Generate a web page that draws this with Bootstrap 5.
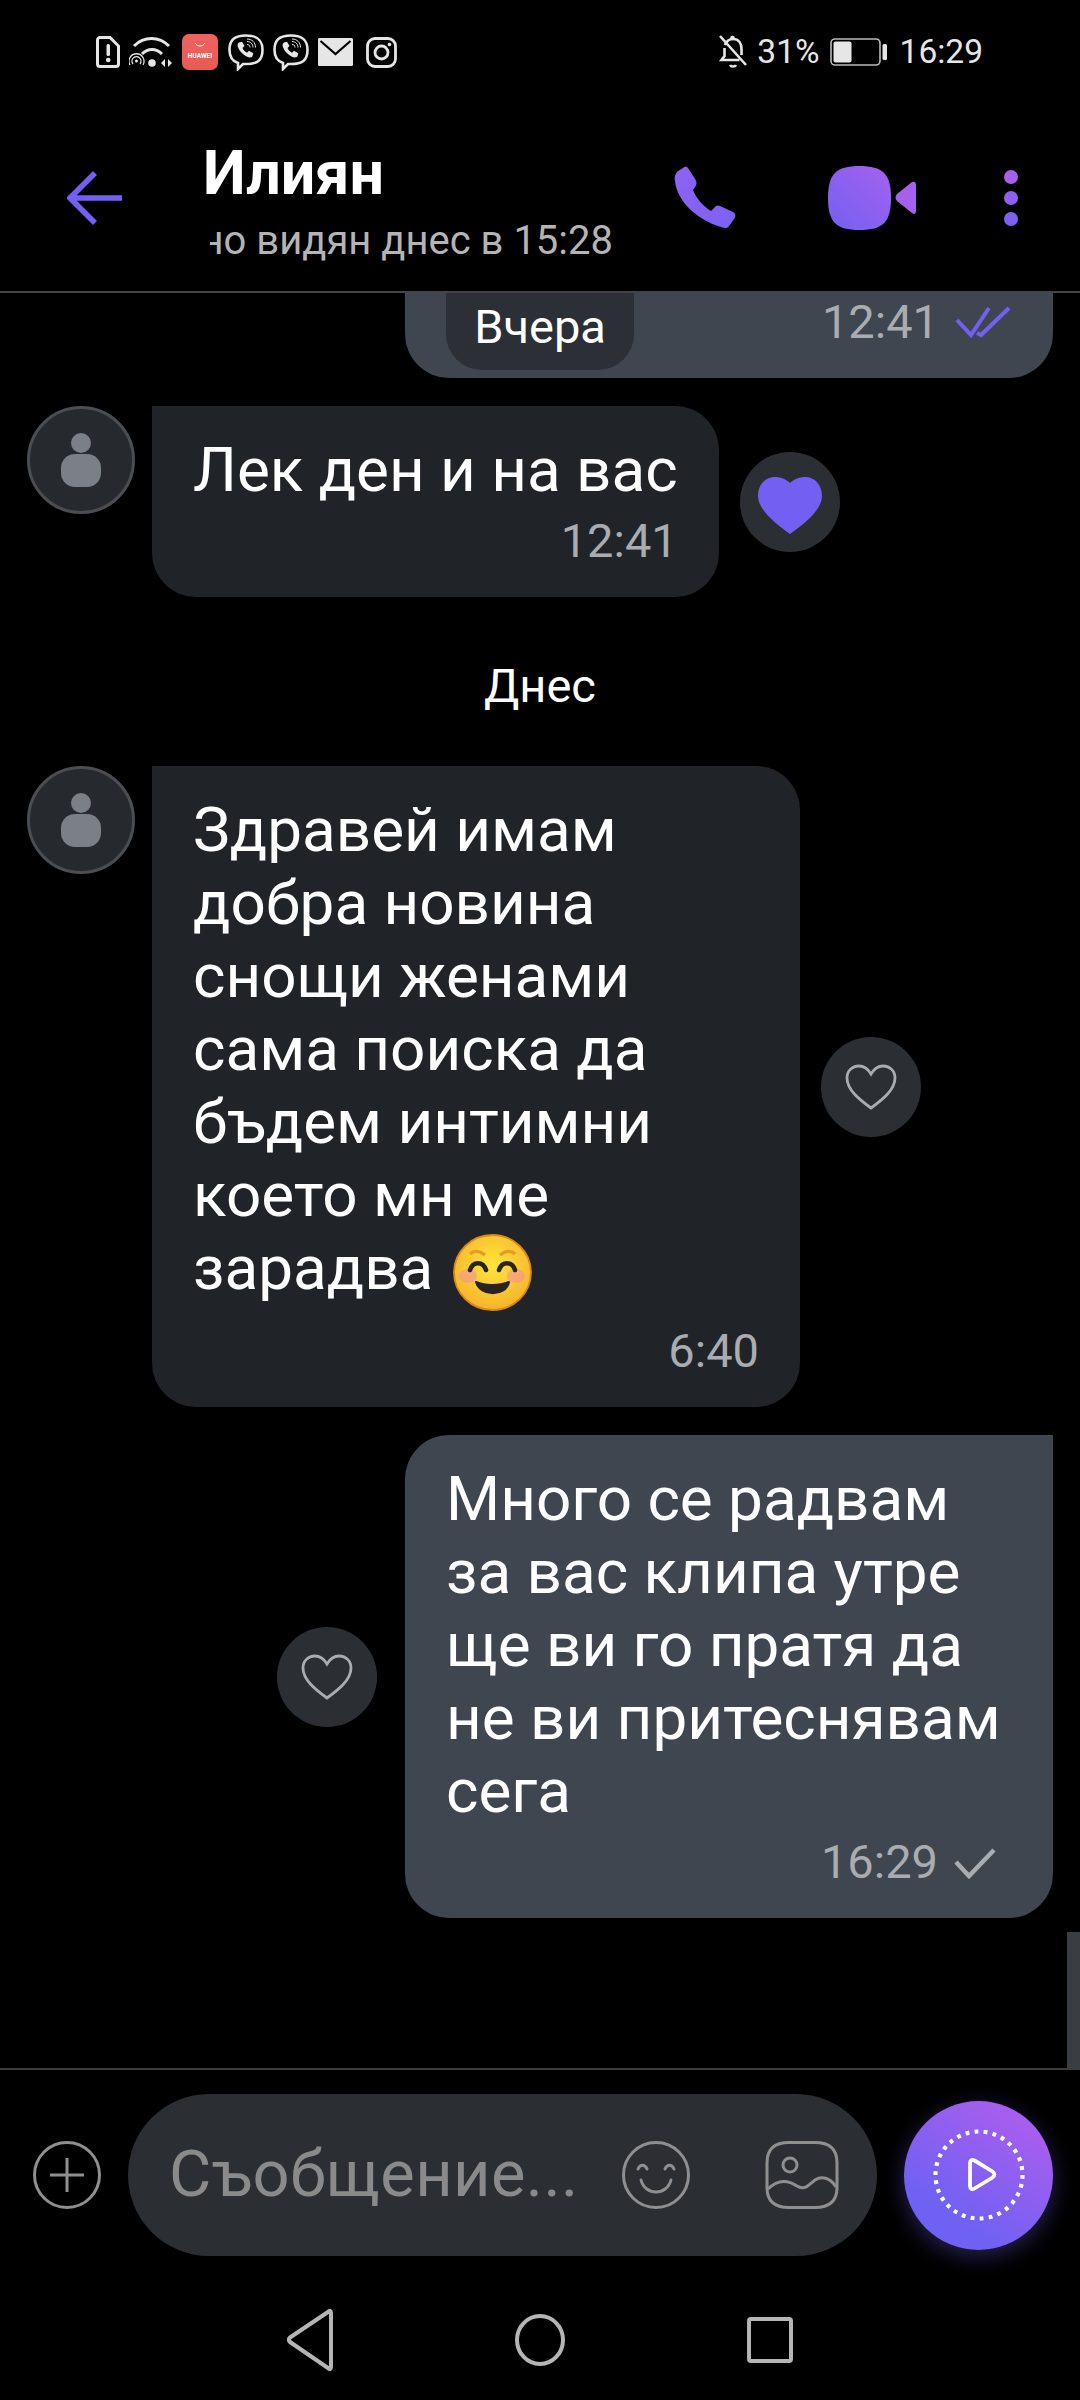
<!DOCTYPE html>
<html lang="bg">
<head>
<meta charset="utf-8">
<title>Илиян</title>
<link href="https://cdn.jsdelivr.net/npm/bootstrap@5.3.0/dist/css/bootstrap.min.css" rel="stylesheet">
<style>
html,body{background:#000;margin:0;}
.phone-screen{width:1080px;height:2400px;background:#000;overflow:hidden;font-family:Roboto,"Liberation Sans",sans-serif;color:#fff;position:relative;}
.status-strip{height:104px;padding:0 97px 0 96px;color:#e6e6e6;font-size:33.5px;line-height:40px;}
.status-left{gap:9px;}
.status-pct{margin-left:9px;}
.status-batt{margin-left:10px;}
.status-clock{margin-left:13px;}
.chat-head{height:189px;padding-left:67px;border-bottom:2px solid #444;}
.head-title{width:408px;margin-left:81px;align-self:flex-start;padding-top:36px;}
.head-name{font-size:61px;font-weight:700;line-height:66px;}
.head-seen{font-size:40px;line-height:50px;color:#b4b4b4;margin:10px -2px 0 7px;white-space:nowrap;overflow:hidden;justify-content:flex-end;}
.head-seen span{flex:none;}
.act-phone{margin-left:63px;}
.act-video{margin-left:92px;}
.act-more{margin-left:88px;}
.chat-scroll{height:1775px;overflow:hidden;padding-bottom:150px;position:relative;}
.msg-row{gap:17px;padding-left:27px;margin-top:28px;}
.msg-row-out{padding-right:27px;margin-top:28px;gap:28px;}
.avatar-disc{width:108px;height:108px;border-radius:50%;background:#26292e;border:3px solid #4a4d52;flex:none;}
.msg-bubble{padding:27px 41px 28px;font-size:62px;line-height:73px;border-radius:44px;}
.msg-in{background:#202429;border-top-left-radius:0;}
.msg-wide{width:648px;}
.msg-out{background:#3f464f;width:648px;border-top-right-radius:0;}
.msg-time{font-size:47px;line-height:56px;color:#a9acb0;margin-top:7px;}
.msg-time-gap{margin-top:18px;}
.check-gap{margin-right:16px;}
.like-disc{width:100px;height:100px;border-radius:50%;background:#2b2e33;flex:none;}
.like-gap{margin-left:4px;}
.day-mark{font-size:47px;line-height:56px;margin:61px 0 52px;}
.emoji-art{width:79px;height:77px;vertical-align:-16px;margin:-12px 0 -6px 4px;}
.quote-bubble{width:648px;height:130px;background:#3f464f;border-radius:0 0 44px 44px;padding-right:42px;}
.quote-inner{width:188px;margin-left:41px;margin-bottom:8px;background:#2c3036;border-radius:0 0 36px 36px;font-size:47px;line-height:56px;padding-bottom:15px;}
.quote-meta{padding-bottom:28px;gap:16px;margin-left:auto;}
.scroll-thumb{position:absolute;right:0;bottom:0;width:13px;height:136px;background:#3a3d42;}
.compose-bar{height:212px;padding:0 27px 0 33px;gap:27px;border-top:2px solid #3c3c3c;}
.compose-pill{width:749px;height:162px;background:#2b2e33;border-radius:81px;padding:0 38px 0 41px;}
.compose-hint{font-size:65px;color:#8a8a8a;letter-spacing:.4px;white-space:nowrap;flex:1;}
.compose-img{margin-left:75px;}
.send-orb{width:149px;height:149px;border-radius:50%;background:linear-gradient(35deg,#6f61f3 25%,#a85eee 85%);box-shadow:0 6px 22px rgba(115,96,242,.35);flex:none;}
.nav-strip{height:120px;}
.nav-cell{width:230px;}
</style>
</head>
<body>
<div class="phone-screen d-flex flex-column">

  <div class="status-strip d-flex align-items-center justify-content-between">
    <div class="status-left d-flex align-items-center">
      <svg width="24" height="32" viewBox="0 0 24 32"><path d="M4 1.500h10l8.500 8.500v18a2.500 2.500 0 0 1-2.500 2.500H4a2.500 2.500 0 0 1-2.500-2.500V4A2.500 2.500 0 0 1 4 1.500z" fill="none" stroke="#e6e6e6" stroke-width="3"/><rect x="10.500" y="8" width="3.500" height="12" rx="1.500" fill="#e6e6e6"/><circle cx="12.200" cy="24" r="2.300" fill="#e6e6e6"/></svg>
      <svg width="44" height="34" viewBox="0 0 44 34"><g fill="none" stroke="#e6e6e6" stroke-width="3"><path d="M5 11C15 1 30 1 40 11"/><path d="M13 19c6-6 14-6 20 0"/></g><g fill="none" stroke="#e6e6e6" stroke-width="1.300"><path d="M1 30a7.500 7.500 0 1 1 13 0"/><path d="M4 29a4.500 4.500 0 1 1 7 0"/></g><circle cx="7.500" cy="26" r="1.500" fill="#e6e6e6"/><circle cx="23" cy="28" r="3.800" fill="#e6e6e6"/><path d="M32 28l4-4v8zM39 24l4 4-4 4z" fill="#e6e6e6"/></svg>
      <svg width="37" height="37" viewBox="0 0 37 37"><defs><linearGradient id="hw" x1="0" y1="0" x2="0" y2="1"><stop offset="0" stop-color="#f0625f"/><stop offset="1" stop-color="#e85a55"/></linearGradient></defs><rect width="36" height="36" rx="7" fill="url(#hw)"/><path d="M13 9c2 4 8 4 10 0" fill="none" stroke="#fff" stroke-width="1" opacity=".9"/><text x="18" y="24" text-anchor="middle" font-family="Roboto,sans-serif" font-size="6.500" font-weight="700" fill="#fff">HUAWEI</text></svg>
      <svg width="36" height="37" viewBox="0 0 36 37"><path d="M18 1.500c11 0 16.500 4 16.500 14.500S29 30 18 30h-3l-5 5v-6C4 27 1.500 23 1.500 16 1.500 5.500 7 1.500 18 1.500z" fill="none" stroke="#e6e6e6" stroke-width="2.600"/><path d="M11 8.500l3-.8 2.500 4.300-2 2c.8 2 2.500 3.800 4.500 4.700l2-2 4.300 2.500-.8 3c-1 1.500-3.500 1.500-5.500.5-4-2-7.500-5.500-9-9.500-.7-2-.5-3.700 1-4.700z" fill="#e6e6e6"/><g fill="none" stroke="#e6e6e6" stroke-width="1"><path d="M19 7.500c3.500 0 6 2.500 6 6"/><path d="M19 10.500c2 0 3 1 3 3"/><path d="M19 5c5 0 8.500 3.500 8.500 8.500"/></g></svg>
      <svg width="36" height="37" viewBox="0 0 36 37"><path d="M18 1.500c11 0 16.500 4 16.500 14.500S29 30 18 30h-3l-5 5v-6C4 27 1.500 23 1.500 16 1.500 5.500 7 1.500 18 1.500z" fill="none" stroke="#e6e6e6" stroke-width="2.600"/><path d="M11 8.500l3-.8 2.500 4.300-2 2c.8 2 2.500 3.800 4.500 4.700l2-2 4.300 2.500-.8 3c-1 1.500-3.500 1.500-5.500.5-4-2-7.500-5.500-9-9.500-.7-2-.5-3.700 1-4.700z" fill="#e6e6e6"/><g fill="none" stroke="#e6e6e6" stroke-width="1"><path d="M19 7.500c3.500 0 6 2.500 6 6"/><path d="M19 10.500c2 0 3 1 3 3"/><path d="M19 5c5 0 8.500 3.500 8.500 8.500"/></g></svg>
      <svg width="35" height="28" viewBox="0 0 35 28"><rect width="35" height="28" rx="1.500" fill="#e6e6e6"/><path d="M2.500 3L17.500 16 32.500 3" fill="none" stroke="#000" stroke-width="2.200"/></svg>
      <svg class="ms-1" width="31" height="31" viewBox="0 0 31 31"><rect x="1.500" y="1.500" width="28" height="28" rx="7.500" fill="none" stroke="#e6e6e6" stroke-width="2.800"/><circle cx="15.500" cy="15.500" r="6.500" fill="none" stroke="#e6e6e6" stroke-width="2.800"/><circle cx="23.500" cy="7.500" r="1.800" fill="#e6e6e6"/></svg>
    </div>
    <div class="d-flex align-items-center">
      <svg width="30" height="34" viewBox="0 0 30 34"><g fill="none" stroke="#e6e6e6" stroke-width="2.600"><path d="M7 10c1.500-4 4-6 8-6 6 0 8.500 4.500 8.500 10v6"/><path d="M6.500 13v8l-3 4h18"/><path d="M2 1l26 29"/><path d="M12 30c1 2 5 2 6 0"/></g><circle cx="14.500" cy="3" r="2.300" fill="#e6e6e6"/></svg>
      <span class="status-pct">31%</span>
      <svg class="status-batt" width="57" height="28" viewBox="0 0 57 28"><rect x="1" y="1" width="49" height="26" rx="4" fill="none" stroke="#b9b9b9" stroke-width="1.600"/><rect x="3.500" y="3.500" width="18" height="21" rx="2" fill="#e6e6e6"/><rect x="52.500" y="6" width="4.500" height="16" rx="1.500" fill="#e6e6e6"/></svg>
      <span class="status-clock">16:29</span>
    </div>
  </div>

  <div class="chat-head d-flex align-items-center">
    <svg width="55" height="54" viewBox="0 0 55 54"><path d="M28 2L3 27l25 25M3 27h52" fill="none" stroke="#7360f2" stroke-width="5.500"/></svg>
    <div class="head-title d-flex flex-column">
      <div class="head-name">Илиян</div>
      <div class="head-seen d-flex"><span>Последно видян днес в 15:28</span></div>
    </div>
    <svg class="act-phone" width="62" height="64" viewBox="0 0 62 64"><defs><linearGradient id="ph" x1="0" y1="0" x2="1" y2="1"><stop offset="0" stop-color="#8f62f2"/><stop offset="1" stop-color="#7c61f4"/></linearGradient></defs><path d="M9 2C11 0 13 1 14 2L21 13C23 16 23 18 21 21L19 24C22 32 29 40 37 45L40 42C42 39 44 39 46 40L59 46C62 48 62 50 60 53L55 60C53 63 50 62 47 61C24 54 3 36 1 15C0 10 2 7 4 5Z" fill="url(#ph)"/></svg>
    <svg class="act-video" width="88" height="64" viewBox="0 0 88 64"><defs><linearGradient id="vd" x1="0" y1="1" x2="1" y2="0"><stop offset="0" stop-color="#7360f2"/><stop offset="1" stop-color="#a561ee"/></linearGradient></defs><path d="M31.500 0C55 0 63 8 63 32S55 64 31.500 64 0 56 0 32 8 0 31.500 0z" fill="url(#vd)"/><path d="M84 16C86 15 88 16 88 19V45C88 48 86 49 84 47L69 35C67 33 67 30 69 28Z" fill="#a561ee"/></svg>
    <svg class="act-more" width="14" height="56" viewBox="0 0 14 56"><circle cx="7" cy="7" r="7" fill="#a561ee"/><circle cx="7" cy="28" r="7" fill="#8f60f0"/><circle cx="7" cy="49" r="7" fill="#7f60f1"/></svg>
  </div>

  <div class="chat-scroll d-flex flex-column justify-content-end">
    <div class="msg-row-out d-flex justify-content-end flex-shrink-0">
      <div class="quote-bubble d-flex align-items-end">
        <div class="quote-inner align-self-stretch d-flex align-items-end justify-content-center">Вчера</div>
        <div class="quote-meta d-flex align-items-center">
          <span class="msg-time m-0">12:41</span>
          <svg width="56" height="32" viewBox="0 0 56 32"><path d="M2 14l14 15L34 2M22 27l4 2L54 2" fill="none" stroke="#7360f2" stroke-width="4"/></svg>
        </div>
      </div>
    </div>

    <div class="msg-row d-flex align-items-center flex-shrink-0">
      <div class="avatar-disc d-flex align-items-center justify-content-center align-self-start">
        <svg width="40" height="54" viewBox="0 0 40 54"><ellipse cx="20" cy="10" rx="10" ry="10" fill="#7b8087"/><rect x="0" y="21" width="40" height="33" rx="14" fill="#7b8087"/></svg>
      </div>
      <div class="msg-bubble msg-in">
        <div>Лек ден и на вас</div>
        <div class="msg-time text-end">12:41</div>
      </div>
      <div class="like-disc like-gap d-flex align-items-center justify-content-center">
        <svg class="mt-2" width="64" height="57" viewBox="0 0 64 57"><path d="M32 6C36 2 42 0 47 0C57 0 64 8 64 19C64 33 46 47 32 57C18 47 0 33 0 19C0 8 7 0 17 0C22 0 28 2 32 6Z" fill="#7360f2"/></svg>
      </div>
    </div>

    <div class="day-mark text-center flex-shrink-0">Днес</div>

    <div class="msg-row d-flex align-items-center flex-shrink-0 mt-0">
      <div class="avatar-disc d-flex align-items-center justify-content-center align-self-start">
        <svg width="40" height="54" viewBox="0 0 40 54"><ellipse cx="20" cy="10" rx="10" ry="10" fill="#7b8087"/><rect x="0" y="21" width="40" height="33" rx="14" fill="#7b8087"/></svg>
      </div>
      <div class="msg-bubble msg-in msg-wide">
        <div>Здравей имам<br>добра новина<br>снощи женами<br>сама поиска да<br>бъдем интимни<br>което мн ме<br>зарадва <svg class="emoji-art" viewBox="0 0 79 77"><defs><radialGradient id="em" cx=".5" cy=".4" r=".62"><stop offset="0" stop-color="#fee53a"/><stop offset="1" stop-color="#f7b22c"/></radialGradient></defs><ellipse cx="39.500" cy="38.500" rx="38.500" ry="37.500" fill="url(#em)" stroke="#d98a12" stroke-width="1.800"/><ellipse cx="15" cy="42" rx="9" ry="7" fill="#f29a8e" opacity=".7"/><ellipse cx="63" cy="42" rx="9" ry="7" fill="#f29a8e" opacity=".7"/><path d="M17 20C21 16 27 17 32 21M47 21C52 17 58 16 62 20" fill="none" stroke="#e9992a" stroke-width="3.500"/><path d="M17 36C20 27 30 27 33 36M46 36C49 27 59 27 62 36" fill="none" stroke="#2a2320" stroke-width="4.500" stroke-linecap="round"/><path d="M23 48C32 52 46 52 56 48C53 63 27 63 23 48Z" fill="#2a2320" stroke="#2a2320" stroke-width="2" stroke-linejoin="round"/></svg></div>
        <div class="msg-time msg-time-gap text-end">6:40</div>
      </div>
      <div class="like-disc like-gap d-flex align-items-center justify-content-center">
        <svg width="52" height="46" viewBox="0 0 52 46"><path d="M26 44C15 36 2 26 2 14 2 7 7 2 14 2c5 0 9 3 12 8 3-5 7-8 12-8 7 0 12 5 12 12 0 12-13 22-24 30z" fill="none" stroke="#a9acb0" stroke-width="2.800"/></svg>
      </div>
    </div>

    <div class="msg-row-out d-flex align-items-center justify-content-end flex-shrink-0">
      <div class="like-disc d-flex align-items-center justify-content-center">
        <svg width="52" height="46" viewBox="0 0 52 46"><path d="M26 44C15 36 2 26 2 14 2 7 7 2 14 2c5 0 9 3 12 8 3-5 7-8 12-8 7 0 12 5 12 12 0 12-13 22-24 30z" fill="none" stroke="#a9acb0" stroke-width="2.800"/></svg>
      </div>
      <div class="msg-bubble msg-out">
        <div>Много се радвам<br>за вас клипа утре<br>ще ви го пратя да<br>не ви притеснявам<br>сега</div>
        <div class="d-flex justify-content-end align-items-center gap-3">
          <span class="msg-time">16:29</span>
          <svg class="mt-2 check-gap" width="42" height="32" viewBox="0 0 42 32"><path d="M2 15l13 14L40 3" fill="none" stroke="#a9acb0" stroke-width="4.500"/></svg>
        </div>
      </div>
    </div>
    <div class="scroll-thumb"></div>
  </div>

  <div class="compose-bar d-flex align-items-center">
    <svg width="68" height="70" viewBox="0 0 68 70"><circle cx="34" cy="35" r="32.500" fill="none" stroke="#8f8f8f" stroke-width="3"/><path d="M34 18v34M17 35h34" fill="none" stroke="#8f8f8f" stroke-width="3"/></svg>
    <div class="compose-pill d-flex align-items-center">
      <span class="compose-hint">Съобщение...</span>
      <svg width="68" height="68" viewBox="0 0 68 68"><g fill="none" stroke="#8f8f8f" stroke-width="3"><circle cx="34" cy="34" r="32.500"/><path d="M16 28c2-5 7-5 9 0M43 28c2-5 7-5 9 0" stroke-linecap="round"/><path d="M19 39c4 16 26 16 30 0" stroke-linecap="round"/></g></svg>
      <svg class="compose-img" width="74" height="68" viewBox="0 0 74 68"><g fill="none" stroke="#8f8f8f" stroke-width="3"><path d="M24 1.500h26c15 0 22 7 22 20v25c0 13-7 20-22 20H24C9 66.500 2 59.500 2 46.500v-25c0-13 7-20 22-20z"/><circle cx="25" cy="24" r="7"/><path d="M3 48c10-10 20-9 29-3 8 5 13-2 18-6 6-4 15-3 21 7"/></g></svg>
    </div>
    <div class="send-orb d-flex align-items-center justify-content-center">
      <svg width="92" height="92" viewBox="0 0 92 92"><circle cx="46" cy="46" r="43.500" fill="none" stroke="#fff" stroke-width="4.200" stroke-dasharray="3.800 5.300"/><path d="M37 34c0-3 2-4 4.500-2.500l18 11c2.500 1.700 2.500 4.300 0 6l-18 11C39 61 37 60 37 57z" fill="none" stroke="#fff" stroke-width="3.800"/></svg>
    </div>
  </div>

  <div class="nav-strip d-flex justify-content-center align-items-center">
    <div class="nav-cell d-flex justify-content-center"><svg width="46" height="62" viewBox="0 0 46 62"><path d="M41 3c2-2 3-1 3 1v54c0 2-1 3-3 1L3 33c-1.500-1.500-1.500-3 0-4.500z" fill="none" stroke="#b5b5b5" stroke-width="4" stroke-linejoin="round"/></svg></div>
    <div class="nav-cell d-flex justify-content-center"><svg width="50" height="52" viewBox="0 0 50 52"><ellipse cx="25" cy="26" rx="23" ry="24" fill="none" stroke="#b5b5b5" stroke-width="4"/></svg></div>
    <div class="nav-cell d-flex justify-content-center"><svg width="46" height="46" viewBox="0 0 46 46"><rect x="2" y="2" width="42" height="42" rx="2" fill="none" stroke="#b5b5b5" stroke-width="4"/></svg></div>
  </div>

</div>
<script src="https://cdn.jsdelivr.net/npm/bootstrap@5.3.0/dist/js/bootstrap.bundle.min.js"></script>
</body>
</html>
